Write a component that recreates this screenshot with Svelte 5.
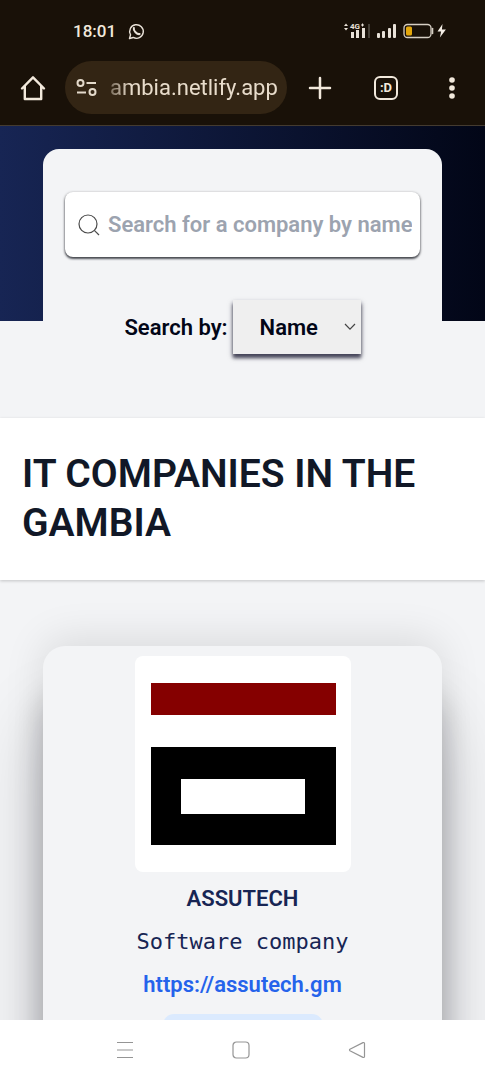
<script>
  let searchBy = $state('name');
  let query = $state('');
  let address = $state('ambia.netlify.app');
</script>

<div class="phone">
  <header class="chrome">
    <div class="status">
      <time>18:01</time>
      <svg class="whatsapp" width="17" height="17" viewBox="0 0 18 18" fill="none" stroke="#e9e2d8" stroke-width="1.5" aria-hidden="true">
        <path d="M1.6 16.4l1.1-3.9a7.2 7.2 0 1 1 2.8 2.8z" stroke-linejoin="round" />
        <path d="M6.2 5.4c-.8 2.600 3.400 6.800 6.100 6.300" stroke-width="2.200" stroke-linecap="round" />
      </svg>
      <span class="spacer"></span>
      <svg width="28" height="18" viewBox="0 0 28 18" fill="#e9e2d8" aria-hidden="true">
        <path d="M0 4l2-2.500 2 2.500zM0 6h4l-2 2.500z" />
        <text x="6" y="7" font-family="Roboto, sans-serif" font-size="8" font-weight="700">4G</text>
        <path d="M17 3h3M18.500 1.500v3" stroke="#e9e2d8" />
        <path d="M7 10h3v6H7zM12 8h3v8h-3zM18 6h3v10h-3z" />
        <path d="M24 2h2v14h-2z" fill="#453f36" />
      </svg>
      <svg class="bars" width="20" height="18" viewBox="0 0 20 18" fill="#e9e2d8" aria-hidden="true">
        <rect x="0" y="11" width="3" height="5" rx="1" />
        <rect x="5" y="9" width="3" height="7" rx="1" />
        <rect x="11" y="6" width="3" height="10" rx="1" />
        <rect x="16" y="2" width="3" height="14" rx="1" />
      </svg>
      <svg class="battery" width="44" height="18" viewBox="0 0 44 18" aria-hidden="true">
        <rect x="1" y="2.500" width="27" height="13" rx="3.500" fill="none" stroke="#d6cfc4" stroke-width="1.300" />
        <path d="M29.500 6.500v5" stroke="#d6cfc4" stroke-width="1.600" stroke-linecap="round" />
        <rect x="3" y="4.500" width="6" height="9" rx="1.500" fill="#e3a70c" />
        <path d="M39.500 2l-5 7.500h3.600l-1.200 6 6-8h-4z" fill="#f4eee5" />
      </svg>
    </div>

    <div class="toolbar">
      <button class="tool home" aria-label="Home">
        <svg width="28" height="28" viewBox="0 0 28 28" fill="none" stroke="#f2e9dc" stroke-width="2.400" stroke-linejoin="round" stroke-linecap="round">
          <path d="M3 14.500L14 3.300l11 11.200M5.800 12v13h16.400V12" />
        </svg>
      </button>
      <div class="address">
        <svg width="22" height="20" viewBox="0 0 22 20" fill="none" stroke="#e4dacb" stroke-width="2" aria-hidden="true">
          <circle cx="4.500" cy="5" r="3" />
          <path d="M10.500 5h9.500M1 14.500h9" />
          <circle cx="16.500" cy="14" r="3" />
        </svg>
        <input type="text" aria-label="Address" bind:value={address} />
      </div>
      <button class="tool" aria-label="New tab">
        <svg width="24" height="24" viewBox="0 0 24 24" stroke="#f2e9dc" stroke-width="2.500" stroke-linecap="round"><path d="M12 2v20M2 12h20" /></svg>
      </button>
      <button class="tool" aria-label="Open tabs">
        <span class="tabs">:D</span>
      </button>
      <button class="tool" aria-label="More options">
        <svg width="8" height="24" viewBox="0 0 8 24" fill="#f2e9dc"><circle cx="4" cy="4" r="2.800" /><circle cx="4" cy="12" r="2.800" /><circle cx="4" cy="20" r="2.800" /></svg>
      </button>
    </div>
  </header>

  <main>
    <section class="hero">
      <form class="panel">
        <label class="search">
          <svg width="22" height="22" viewBox="0 0 22 22" fill="none" stroke="#4b4b4b" stroke-width="1.200" aria-hidden="true">
            <circle cx="10" cy="10" r="9" />
            <path d="M16.300 16.300l4.700 4.700" />
          </svg>
          <input type="text" aria-label="Search for a company" placeholder="Search for a company by name" bind:value={query} />
        </label>
        <div class="filter">
          <label for="search-by">Search by:</label>
          <div class="select">
            <select id="search-by" bind:value={searchBy}>
              <option value="name">Name</option>
              <option value="location">Location</option>
            </select>
            <svg width="12" height="8" viewBox="0 0 12 8" fill="none" stroke="#444" stroke-width="1.200" aria-hidden="true"><path d="M1 1l5 5.200L11 1" /></svg>
          </div>
        </div>
      </form>
    </section>

    <div class="title">
      <h1>IT COMPANIES IN THE GAMBIA</h1>
    </div>

    <section class="list">
      <article class="card">
        <svg class="logo" viewBox="0 0 216 216" role="img" aria-label="Assutech logo">
          <rect width="216" height="216" fill="#fff" />
          <rect x="16" y="27" width="185" height="32" fill="#850000" />
          <path d="M16 91h185v98H16zM46 123v35h124v-35z" fill="#000" fill-rule="evenodd" />
        </svg>
        <h2>ASSUTECH</h2>
        <p>Software company</p>
        <a class="site" href="https://assutech.gm">https://assutech.gm</a>
        <div class="tag"></div>
      </article>
    </section>
  </main>

  <nav class="system">
    <button aria-label="Recent apps">
      <svg width="18" height="18" viewBox="0 0 18 18" stroke="#959595" stroke-width="1.200"><path d="M1 1.500h16M1 9h16M1 16.500h16" /></svg>
    </button>
    <button aria-label="Home screen">
      <svg width="18" height="18" viewBox="0 0 18 18" fill="none" stroke="#959595" stroke-width="1.200"><rect x="1" y="1" width="16" height="16" rx="3.500" /></svg>
    </button>
    <button aria-label="Back">
      <svg width="18" height="18" viewBox="0 0 18 18" fill="none" stroke="#959595" stroke-width="1.200" stroke-linejoin="round"><path d="M15 1.600L1.900 8.300q-.8.700 0 1.400L15 16.400q1.500.4 1.500-1V2.600q0-1.400-1.500-1z" /></svg>
    </button>
  </nav>
</div>

<style>
  :global(body) {
    margin: 0;
    font-family: Roboto, sans-serif;
  }

  .phone {
    display: flex;
    flex-direction: column;
    height: 100vh;
    overflow: hidden;
    background: #f3f4f6;
  }

  button,
  input,
  select {
    font: inherit;
    border: 0;
    padding: 0;
    margin: 0;
    background: none;
  }

  svg {
    display: block;
    flex: none;
  }

  .chrome {
    flex: none;
    background: #191108;
    border-bottom: 1px solid #443b30;
    color: #f2e9dc;
  }

  .status {
    display: flex;
    align-items: center;
    padding: 20px 38px 0 73px;
    height: 22px;
    font-size: 17px;
    font-weight: 500;
  }

  .whatsapp {
    margin-left: 12px;
  }

  .spacer {
    flex: 1;
  }

  .bars {
    margin-left: 5px;
  }

  .battery {
    margin-left: 6px;
  }

  .toolbar {
    display: flex;
    align-items: center;
    padding: 19px 0 11px;
  }

  .tool {
    display: flex;
    flex: none;
    justify-content: center;
    align-items: center;
    width: 66px;
    height: 53px;
    color: inherit;
  }

  .home {
    width: 65px;
  }

  .address {
    display: flex;
    flex: 1;
    align-items: center;
    gap: 12px;
    min-width: 0;
    height: 53px;
    padding: 0 8px 0 11px;
    box-sizing: border-box;
    border-radius: 27px;
    background: #332514;
  }

  .address input {
    flex: 1;
    min-width: 0;
    height: 32px;
    font-size: 22px;
    color: #e8dccb;
    outline: none;
    mask-image: linear-gradient(to right, rgb(0 0 0 / 0.4), #000 20px);
  }

  .tabs {
    display: flex;
    justify-content: center;
    align-items: center;
    width: 20px;
    height: 20px;
    border: 2px solid #f2e9dc;
    border-radius: 6px;
    font-size: 13px;
    font-weight: 700;
  }

  main {
    flex: 1;
    min-height: 0;
    overflow: hidden;
  }

  .hero {
    padding: 23px 43px 0;
    background: linear-gradient(to right, #172554, #020617) no-repeat 0 0 / 100% 195px;
  }

  .panel {
    padding: 43px 22px 64px;
    border-radius: 16px 16px 0 0;
    background: #f3f4f6;
  }

  .search {
    display: flex;
    align-items: center;
    gap: 8px;
    height: 65px;
    padding: 0 8px 0 13px;
    border-radius: 8px;
    background: #fff;
    box-shadow: 0 1px 3px rgb(0 0 0 / 0.6), 0 2px 2px rgb(17 24 39 / 0.5);
  }

  .search input {
    flex: 1;
    min-width: 0;
    font-size: 22px;
    font-weight: 600;
    color: #111827;
    outline: none;
  }

  .search input::placeholder {
    color: #9ca3af;
    opacity: 1;
  }

  .filter {
    display: flex;
    justify-content: center;
    align-items: center;
    gap: 5px;
    margin-top: 43px;
    font-size: 22px;
    font-weight: 600;
    color: #020617;
  }

  .select {
    display: grid;
    align-items: center;
    background: #efefef;
    box-shadow: 0 3px 5px rgb(15 15 40 / 0.6), 0 4px 3px rgb(15 15 40 / 0.5);
  }

  .select select,
  .select svg {
    grid-area: 1 / 1;
  }

  .select select {
    appearance: none;
    width: 128px;
    height: 54px;
    padding-left: 27px;
    color: inherit;
  }

  .select svg {
    justify-self: end;
    margin-right: 5px;
    pointer-events: none;
  }

  .title {
    padding: 32px 22px;
    background: #fff;
    box-shadow: 0 1px 3px rgb(0 0 0 / 0.2);
  }

  h1 {
    margin: 0;
    font-size: 39px;
    line-height: 49px;
    font-weight: 600;
    color: #111827;
  }

  .list {
    padding: 66px 43px 0;
  }

  .card {
    display: flex;
    flex-direction: column;
    align-items: center;
    padding: 10px 22px 43px;
    border-radius: 22px;
    background: #f3f4f6;
    box-shadow: 0 72px 74px rgb(0 0 20 / 0.2), 0 -8px 40px rgb(0 0 0 / 0.1), 0 50px 30px rgb(0 0 20 / 0.2);
    font-size: 22px;
    line-height: 32px;
    color: #172554;
  }

  .logo {
    width: 216px;
    height: 216px;
    border-radius: 8px;
  }

  h2 {
    margin: 11px 0 0;
    font-size: inherit;
    font-weight: 600;
  }

  p {
    margin: 11px 0 0;
    font-family: "DejaVu Sans Mono", monospace;
    font-size: 22px;
  }

  .site {
    margin-top: 11px;
    font-weight: 600;
    color: #2563eb;
    text-decoration: none;
  }

  .tag {
    width: 160px;
    height: 32px;
    margin-top: 13px;
    border-radius: 11px;
    background: #dbeafe;
  }

  .system {
    position: relative;
    display: flex;
    flex: none;
    justify-content: center;
    gap: 67px;
    height: 60px;
    padding-right: 4px;
    background: #fff;
  }

  .system button {
    display: flex;
    justify-content: center;
    align-items: center;
    width: 49px;
  }
</style>
